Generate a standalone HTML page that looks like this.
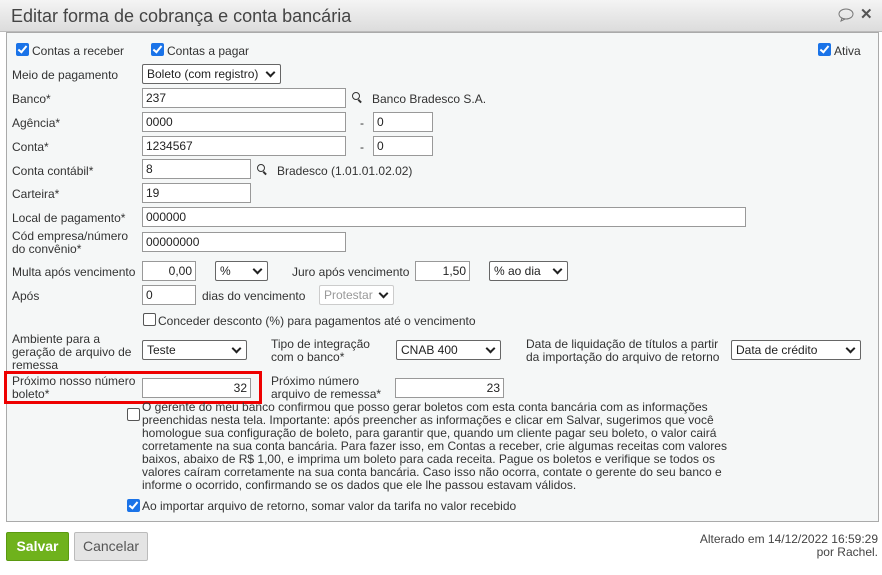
<!DOCTYPE html>
<html><head><meta charset="utf-8"><style>
*{box-sizing:border-box;margin:0;padding:0}
body{width:882px;height:575px;background:#fff;font-family:"Liberation Sans",sans-serif;font-size:12px;color:#333;position:relative;overflow:hidden}
.a{position:absolute;white-space:nowrap;line-height:14px}
.title{position:absolute;left:0;top:0;width:882px;height:32px;background:linear-gradient(#f4f4f4,#dcdcdc);border-bottom:1px solid #bbb}
.title span{position:absolute;left:11px;top:6px;font-size:18px;color:#444}
.panel{position:absolute;left:6px;top:32px;width:873px;height:490px;background:#f5f7f7;border:1px solid #aaa}
.in{position:absolute;height:20px;background:#fff;border:1px solid #999;padding:2px 3px;font-size:12px;line-height:14px;color:#222}
.r{text-align:right}
.sel{position:absolute;height:20px;background:#fff;border:1px solid #666;border-radius:2px;padding:2px 4px;line-height:14px;color:#222}
.sel:after{content:"";position:absolute;right:6px;top:4px;width:5px;height:5px;border-right:2px solid #222;border-bottom:2px solid #222;transform:rotate(45deg)}
.cb{position:absolute;width:13px;height:13px;border-radius:2px;background:#1a73e8}
.cb:after{content:"";position:absolute;left:4px;top:1px;width:3px;height:7px;border-right:2px solid #fff;border-bottom:2px solid #fff;transform:rotate(40deg)}
.cbo{position:absolute;width:13px;height:13px;border-radius:2px;border:1px solid #555;background:#fff}
.mag{position:absolute;width:8px;height:8px;border:1.5px solid #333;border-radius:50%}
.mag:after{content:"";position:absolute;left:6px;top:6px;width:4px;height:1.5px;background:#333;transform:rotate(45deg);transform-origin:0 0}
</style></head><body>
<div class="title"><span>Editar forma de cobrança e conta bancária</span>
<svg style="position:absolute;left:838px;top:8px" width="16" height="14"><ellipse cx="8" cy="6" rx="7" ry="5" fill="none" stroke="#777" stroke-width="1"/><path d="M4 10 L3 13 L7 11" fill="none" stroke="#777"/></svg>
<span style="left:860px;top:5px;font-size:15px;font-weight:bold;color:#555">✕</span></div>
<div class="panel"></div>
<div class="cb" style="left:16px;top:43px"></div><div class="a" style="left:32px;top:44px">Contas a receber</div>
<div class="cb" style="left:151px;top:43px"></div><div class="a" style="left:167px;top:44px">Contas a pagar</div>
<div class="cb" style="left:818px;top:43px"></div><div class="a" style="left:834px;top:44px">Ativa</div>

<div class="a" style="left:12px;top:68px">Meio de pagamento</div>
<div class="sel" style="left:142px;top:64px;width:139px;padding-right:20px">Boleto (com registro)</div>
<div class="a" style="left:12px;top:92px">Banco*</div>
<div class="in" style="left:142px;top:88px;width:204px">237</div>
<div class="mag" style="left:352px;top:92px"></div><div class="a" style="left:372px;top:92px">Banco Bradesco S.A.</div>
<div class="a" style="left:12px;top:116px">Agência*</div>
<div class="in" style="left:142px;top:112px;width:204px">0000</div>
<div class="a" style="left:360px;top:116px">-</div><div class="in" style="left:373px;top:112px;width:60px">0</div>
<div class="a" style="left:12px;top:140px">Conta*</div>
<div class="in" style="left:142px;top:136px;width:204px">1234567</div>
<div class="a" style="left:360px;top:140px">-</div><div class="in" style="left:373px;top:136px;width:60px">0</div>
<div class="a" style="left:12px;top:164px">Conta contábil*</div>
<div class="in" style="left:142px;top:159px;width:109px">8</div>
<div class="mag" style="left:257px;top:164px"></div><div class="a" style="left:277px;top:164px">Bradesco (1.01.01.02.02)</div>
<div class="a" style="left:12px;top:187px">Carteira*</div>
<div class="in" style="left:142px;top:183px;width:109px">19</div>
<div class="a" style="left:12px;top:211px">Local de pagamento*</div>
<div class="in" style="left:142px;top:207px;width:604px">000000</div>
<div class="a" style="left:12px;top:229px">Cód empresa/número</div><div class="a" style="left:12px;top:242px">do convênio*</div>
<div class="in" style="left:142px;top:232px;width:204px">00000000</div>
<div class="a" style="left:12px;top:265px">Multa após vencimento</div>
<div class="in r" style="left:142px;top:261px;width:54px">0,00</div>
<div class="sel" style="left:215px;top:261px;width:53px">%</div>
<div class="a" style="left:292px;top:265px">Juro após vencimento</div>
<div class="in r" style="left:415px;top:261px;width:55px">1,50</div>
<div class="sel" style="left:489px;top:261px;width:79px">% ao dia</div>
<div class="a" style="left:12px;top:289px">Após</div>
<div class="in" style="left:142px;top:285px;width:54px">0</div>
<div class="a" style="left:202px;top:289px">dias do vencimento</div>
<div class="sel" style="left:319px;top:285px;width:75px;border-color:#ccc;color:#999">Protestar</div>
<div class="cbo" style="left:143px;top:313px"></div><div class="a" style="left:158px;top:314px">Conceder desconto (%) para pagamentos até o vencimento</div>
<div class="a" style="left:12px;top:333px;line-height:13px">Ambiente para a<br>geração de arquivo de<br>remessa</div>
<div class="sel" style="left:142px;top:340px;width:105px">Teste</div>
<div class="a" style="left:271px;top:338px;line-height:13px">Tipo de integração<br>com o banco*</div>
<div class="sel" style="left:396px;top:340px;width:105px">CNAB 400</div>
<div class="a" style="left:526px;top:338px;line-height:13px">Data de liquidação de títulos a partir<br>da importação do arquivo de retorno</div>
<div class="sel" style="left:731px;top:340px;width:130px">Data de crédito</div>
<div style="position:absolute;left:4px;top:371px;width:258px;height:33px;border:3px solid #e00"></div>
<div class="a" style="left:12px;top:375px;line-height:13px">Próximo nosso número<br>boleto*</div>
<div class="in r" style="left:142px;top:378px;width:109px">32</div>
<div class="a" style="left:271px;top:375px;line-height:13px">Próximo número<br>arquivo de remessa*</div>
<div class="in r" style="left:395px;top:378px;width:109px">23</div>
<div class="cbo" style="left:127px;top:408px"></div>
<div class="a" style="left:142px;top:401px;line-height:13px">O gerente do meu banco confirmou que posso gerar boletos com esta conta bancária com as informações<br>preenchidas nesta tela. Importante: após preencher as informações e clicar em Salvar, sugerimos que você<br>homologue sua configuração de boleto, para garantir que, quando um cliente pagar seu boleto, o valor cairá<br>corretamente na sua conta bancária. Para fazer isso, em Contas a receber, crie algumas receitas com valores<br>baixos, abaixo de R$ 1,00, e imprima um boleto para cada receita. Pague os boletos e verifique se todos os<br>valores caíram corretamente na sua conta bancária. Caso isso não ocorra, contate o gerente do seu banco e<br>informe o ocorrido, confirmando se os dados que ele lhe passou estavam válidos.</div>
<div class="cb" style="left:127px;top:499px"></div><div class="a" style="left:142px;top:499px">Ao importar arquivo de retorno, somar valor da tarifa no valor recebido</div>
<div style="position:absolute;left:6px;top:532px;width:63px;height:29px;background:#6fb21c;border:1px solid #5a9a10;border-radius:2px;color:#fff;font-weight:bold;font-size:14px;text-align:center;line-height:27px">Salvar</div>
<div style="position:absolute;left:74px;top:532px;width:74px;height:29px;background:#e4e4e4;border:1px solid #bbb;border-radius:2px;color:#555;font-size:14px;text-align:center;line-height:27px">Cancelar</div>
<div class="a" style="right:4px;top:533px;text-align:right;line-height:13px;color:#444">Alterado em 14/12/2022 16:59:29<br>por Rachel.</div>
</body></html>
